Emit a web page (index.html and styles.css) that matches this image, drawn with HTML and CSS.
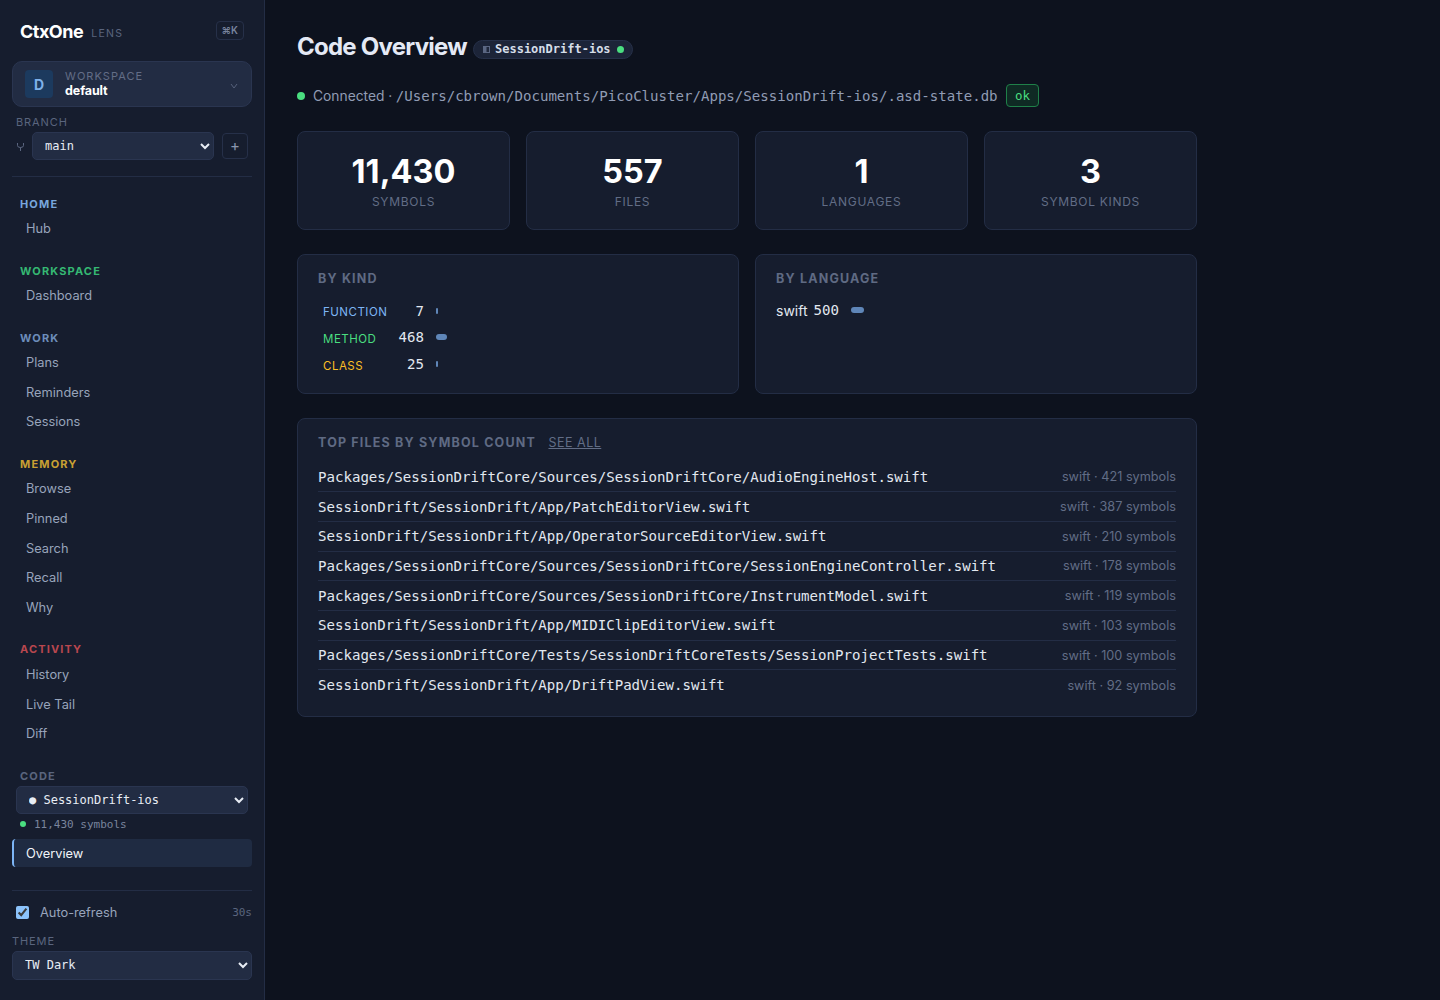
FILE: index.html
```html
<!DOCTYPE html>
<html lang="en">
<head>
<meta charset="utf-8">
<title>CtxOne Lens - Code Overview</title>
<link rel="stylesheet" href="styles.css">
</head>
<body>
<div class="app">
  <aside class="sidebar">
    <div class="brand">
      <span class="logo">CtxOne</span><span class="lens">LENS</span>
      <span class="kbd">⌘K</span>
    </div>
    <div class="workspace">
      <span class="ws-avatar">D</span>
      <span class="ws-text"><span class="ws-label">WORKSPACE</span><span class="ws-name">default</span></span>
      <svg class="ws-chev" width="8" height="6" viewBox="0 0 8 6" fill="none" stroke="#56617b" stroke-width="1"><path d="M1 1l3 4 3-4"/></svg>
    </div>
    <div class="branch-label">BRANCH</div>
    <div class="branch-row">
      <svg class="branch-icon" width="7" height="8" viewBox="0 0 7 8" fill="none" stroke="#5b6680" stroke-width="1"><path d="M.5 0v2.500Q.5 4.500 3.500 4.500T6.500 2.500V0M3.500 4.500V8"/></svg>
      <select class="select branch-select"><option>main</option></select>
      <button class="add-btn">+</button>
    </div>
    <nav class="nav">
      <div class="nav-group">
        <div class="nav-title c-blue">HOME</div>
        <a class="nav-item">Hub</a>
      </div>
      <div class="nav-group">
        <div class="nav-title c-green">WORKSPACE</div>
        <a class="nav-item">Dashboard</a>
      </div>
      <div class="nav-group">
        <div class="nav-title c-blue2">WORK</div>
        <a class="nav-item">Plans</a>
        <a class="nav-item">Reminders</a>
        <a class="nav-item">Sessions</a>
      </div>
      <div class="nav-group">
        <div class="nav-title c-yellow">MEMORY</div>
        <a class="nav-item">Browse</a>
        <a class="nav-item">Pinned</a>
        <a class="nav-item">Search</a>
        <a class="nav-item">Recall</a>
        <a class="nav-item">Why</a>
      </div>
      <div class="nav-group">
        <div class="nav-title c-red">ACTIVITY</div>
        <a class="nav-item">History</a>
        <a class="nav-item">Live Tail</a>
        <a class="nav-item">Diff</a>
      </div>
      <div class="nav-group code-group">
        <div class="nav-title c-gray">CODE</div>
        <select class="select code-select"><option>● SessionDrift-ios</option></select>
        <div class="code-status"><span class="dot dot-small"></span>11,430 symbols</div>
        <a class="nav-item active">Overview</a>
      </div>
    </nav>
    <div class="side-foot">
      <label class="refresh">
        <input type="checkbox" class="check" checked>
        <span class="refresh-text">Auto-refresh</span>
        <span class="refresh-int">30s</span>
      </label>
      <div class="theme-label">THEME</div>
      <select class="select theme-select"><option>TW Dark</option></select>
    </div>
  </aside>
  <main class="main">
    <div class="content">
      <header class="title-row">
        <h1 class="title">Code Overview</h1>
        <span class="pill"><svg class="pill-icon" width="7" height="7" viewBox="0 0 7 7"><rect width="7" height="7" fill="#5a6682"/><rect x="3.500" y="1" width="2.500" height="5" fill="#1e263a"/></svg>SessionDrift-ios<span class="dot dot-pill"></span></span>
      </header>
      <div class="conn">
        <span class="dot"></span>
        <span class="conn-text">Connected ·</span>
        <span class="conn-path">/Users/cbrown/Documents/PicoCluster/Apps/SessionDrift-ios/.asd-state.db</span>
        <span class="ok">ok</span>
      </div>
      <section class="stats">
        <div class="stat"><div class="stat-num">11,430</div><div class="stat-label">SYMBOLS</div></div>
        <div class="stat"><div class="stat-num">557</div><div class="stat-label">FILES</div></div>
        <div class="stat"><div class="stat-num">1</div><div class="stat-label">LANGUAGES</div></div>
        <div class="stat"><div class="stat-num">3</div><div class="stat-label">SYMBOL KINDS</div></div>
      </section>
      <section class="two">
        <div class="card">
          <h2 class="card-title">BY KIND</h2>
          <table class="kinds">
            <tr><td class="k-name c-fn">FUNCTION</td><td class="k-num">7</td><td class="k-bar"><span class="bar bar-thin"></span></td></tr>
            <tr><td class="k-name c-method">METHOD</td><td class="k-num">468</td><td class="k-bar"><span class="bar bar-wide"></span></td></tr>
            <tr><td class="k-name c-class">CLASS</td><td class="k-num">25</td><td class="k-bar"><span class="bar bar-thin"></span></td></tr>
          </table>
        </div>
        <div class="card">
          <h2 class="card-title">BY LANGUAGE</h2>
          <div class="lang"><span class="lang-name">swift</span><span class="k-num">500</span><span class="bar bar-lang"></span></div>
        </div>
      </section>
      <section class="card files">
        <div class="files-head"><h2 class="card-title files-title">TOP FILES BY SYMBOL COUNT</h2><a class="see-all">SEE ALL</a></div>
        <ul class="file-list">
          <li class="file"><span class="path">Packages/SessionDriftCore/Sources/SessionDriftCore/AudioEngineHost.swift</span><span class="meta">swift · 421 symbols</span></li>
          <li class="file"><span class="path">SessionDrift/SessionDrift/App/PatchEditorView.swift</span><span class="meta">swift · 387 symbols</span></li>
          <li class="file"><span class="path">SessionDrift/SessionDrift/App/OperatorSourceEditorView.swift</span><span class="meta">swift · 210 symbols</span></li>
          <li class="file"><span class="path">Packages/SessionDriftCore/Sources/SessionDriftCore/SessionEngineController.swift</span><span class="meta">swift · 178 symbols</span></li>
          <li class="file"><span class="path">Packages/SessionDriftCore/Sources/SessionDriftCore/InstrumentModel.swift</span><span class="meta">swift · 119 symbols</span></li>
          <li class="file"><span class="path">SessionDrift/SessionDrift/App/MIDIClipEditorView.swift</span><span class="meta">swift · 103 symbols</span></li>
          <li class="file"><span class="path">Packages/SessionDriftCore/Tests/SessionDriftCoreTests/SessionProjectTests.swift</span><span class="meta">swift · 100 symbols</span></li>
          <li class="file"><span class="path">SessionDrift/SessionDrift/App/DriftPadView.swift</span><span class="meta">swift · 92 symbols</span></li>
        </ul>
      </section>
    </div>
  </main>
</div>
</body>
</html>
```
FILE: styles.css
```css
* { box-sizing: border-box; }
html, body { margin: 0; height: 100%; }
body {
  background: #0d121e;
  color: #e2e8f0;
  font-family: Inter, "Liberation Sans", sans-serif;
  color-scheme: dark;
  overflow: hidden;
}
.app { display: flex; height: 1000px; }

/* Sidebar */
.sidebar {
  width: 265px;
  flex: none;
  background: #161d2e;
  border-right: 1px solid #232d45;
  padding: 21px 12px 0;
  display: flex;
  flex-direction: column;
}
.brand { display: flex; align-items: center; height: 20px; padding: 0 8px; }
.logo { font-size: 18px; font-weight: 700; color: #fff; letter-spacing: -0.5px; }
.lens { font-size: 10.500px; color: #5a657e; letter-spacing: 1.300px; margin-left: 8px; margin-top: 4px; }
.kbd {
  margin-left: auto;
  font-size: 9.800px;
  font-weight: 600;
  color: #78849e;
  border: 1px solid #263049;
  border-radius: 4px;
  padding: 3px 5px;
  line-height: 11px;
  height: 19px;
  margin-top: -1px;
}
.workspace {
  margin-top: 20px;
  height: 46px;
  background: #222c43;
  border: 1px solid #2a3550;
  border-radius: 10px;
  display: flex;
  align-items: center;
  padding: 0 13px 0 12px;
}
.ws-avatar {
  width: 28px; height: 28px;
  border-radius: 4px;
  background: #1c3a5e;
  color: #7fb2ea;
  font-weight: 700;
  font-size: 14px;
  display: flex; align-items: center; justify-content: center;
}
.ws-text { display: flex; flex-direction: column; margin-left: 12px; flex: 1; margin-top: -1px; }
.ws-label { font-size: 11px; color: #626d86; letter-spacing: 1.050px; line-height: 14px; }
.ws-name { font-size: 12.500px; font-weight: 700; color: #fff; line-height: 15px; letter-spacing: -0.1px; }
.ws-chev { margin-top: 4px; }
.branch-label { font-size: 11px; color: #5a657e; letter-spacing: 0.9px; margin: 8px 0 0 4px; line-height: 14px; }
.branch-row { display: flex; align-items: center; margin-top: 3px; padding: 0 0 0 5px; height: 28px; }
.branch-icon { flex: none; margin-right: 8px; margin-top: 1px; }
.select {
  font-family: "DejaVu Sans Mono", monospace;
  font-size: 12px;
  color: #e8edf5;
  background-color: #222c43;
  border: 1px solid #2a3550;
  border-radius: 5px;
}
.branch-select { width: 182px; height: 28px; padding-left: 8px; }
.add-btn {
  width: 26px; height: 26px; margin-left: 8px;
  background: transparent;
  border: 1px solid #263049;
  border-radius: 4px;
  color: #8a96ae;
  font-size: 15px;
  line-height: 1;
  padding: 0 0 2px;
  font-family: Inter, sans-serif;
}
.nav { margin-top: 16px; border-top: 1px solid #232d45; padding-top: 19.600px; flex: 1; }
.nav-group { margin-bottom: 19.750px; }
.nav-title { font-size: 11px; font-weight: 700; letter-spacing: 1.150px; line-height: 14px; padding-left: 8px; margin-bottom: 3.550px; }
.c-blue { color: #78a6dc; }
.c-green { color: #35b873; }
.c-blue2 { color: #6d8dbb; }
.c-yellow { color: #c9a033; }
.c-red { color: #b9474f; }
.c-gray { color: #5a657e; }
.nav-item {
  display: block;
  font-size: 12.800px;
  color: #98a4bb;
  height: 29.670px;
  line-height: 29.670px;
  padding-left: 14px;
  border-radius: 4px;
}
.nav-item.active {
  color: #f1f5f9;
  background: #1f2b42;
  border-left: 2px solid #7db5f5;
  padding-left: 12px;
  height: 28px;
  line-height: 29px;
}
.code-select { display: block; width: 232px; height: 28px; margin: 1.450px 0 0 4px; padding-left: 8px; }
.code-status {
  font-family: "DejaVu Sans Mono", monospace;
  font-size: 11px;
  color: #7a859d;
  display: flex;
  align-items: center;
  padding-left: 8px;
  height: 20px;
  margin: 0 0 5px;
}
.dot { width: 8px; height: 8px; border-radius: 50%; background: #4ade80; flex: none; }
.dot-small { width: 6px; height: 6px; margin-right: 8px; }
.side-foot { border-top: 1px solid #232d45; height: 110px; flex: none; }
.refresh { display: flex; align-items: center; height: 42px; padding-left: 4px; }
.check { width: 13px; height: 13px; margin: 0; accent-color: #8cc3fb; }
.refresh-text { font-size: 12.800px; color: #98a4bb; margin-left: 11px; }
.refresh-int { margin-left: auto; font-family: "DejaVu Sans Mono", monospace; font-size: 11px; color: #5a657e; }
.theme-label { font-size: 11px; color: #5a657e; letter-spacing: 0.9px; line-height: 14px; margin-top: 1px; }
.theme-select { display: block; width: 240px; height: 29px; margin-top: 3px; padding: 0 0 2px 8px; }

/* Main */
.main { flex: 1; padding: 32px 32px 0; }
.content { width: 900px; }
.title-row { display: flex; align-items: center; height: 32px; }
.title { margin: -3px 0 0; font-size: 24px; font-weight: 700; color: #e4e9f5; letter-spacing: -0.75px; }
.pill {
  display: inline-flex; align-items: center;
  height: 19px;
  margin-left: 6px; margin-top: 2px;
  padding: 0 8px 0 9px;
  background: #1c2438;
  border: 1px solid #263049;
  border-radius: 10px;
  font-family: "DejaVu Sans Mono", monospace;
  font-size: 12px;
  font-weight: 700;
  color: #d5dde8;
}
.pill-icon { margin-right: 5px; }
.dot-pill { width: 7px; height: 7px; margin-left: 6px; }
.conn { display: flex; align-items: center; margin-top: 20px; height: 24px; font-size: 13.800px; color: #919cb4; }
.conn-text { margin-left: 8px; }
.conn-path { margin-left: 3.500px; font-family: "DejaVu Sans Mono", monospace; font-size: 14.080px; }
.ok {
  margin-left: 8.500px;
  font-family: "DejaVu Sans Mono", monospace;
  font-size: 12.500px;
  height: 23px; line-height: 21px;
  margin-top: -1px;
  padding: 0 8px;
  color: #4ade80;
  background: #0f2a24;
  border: 1px solid #1f8049;
  border-radius: 4px;
}
.stats { display: grid; grid-template-columns: repeat(4, 213px); gap: 16px; margin-top: 23px; }
.stat {
  height: 99px;
  background: #161d2e;
  border: 1px solid #232d45;
  border-radius: 8px;
  text-align: center;
  padding-top: 20px;
}
.stat-num { font-size: 32.500px; font-weight: 700; color: #fff; line-height: 40px; }
.stat-label { font-size: 12px; color: #626d86; letter-spacing: 0.7px; line-height: 16px; margin-top: 2px; }
.two { display: grid; grid-template-columns: 442px 442px; gap: 16px; margin-top: 24px; }
.card {
  background: #161d2e;
  border: 1px solid #232d45;
  border-radius: 8px;
  padding: 16px 20px;
  height: 140px;
}
.card-title { margin: 0; font-size: 12.500px; font-weight: 700; letter-spacing: 1.180px; color: #5f6a83; line-height: 16px; }
.kinds { border-collapse: collapse; margin: 11px 0 0 5px; }
.kinds td { padding: 0; height: 26.670px; }
.k-name { font-family: Inter, sans-serif; font-size: 11.500px; letter-spacing: 0.5px; width: 70px; padding-top: 2px !important; }
.c-fn { color: #7db5f5; }
.c-method { color: #4ade80; }
.c-class { color: #fbbf24; }
.k-num { font-family: "DejaVu Sans Mono", monospace; font-size: 14.080px; color: #e2e8f0; text-align: right; }
.kinds .k-num { width: 31px; padding-bottom: 1px; }
.k-bar { padding: 0 0 1px 12px !important; }
.bar { display: block; height: 6px; background: #5f86b8; border-radius: 3px; }
.kinds .k-bar { width: 60px; }
.bar-thin { width: 2px; }
.bar-wide { width: 11px; }
.lang { display: flex; align-items: center; margin-top: 10px; height: 26px; }
.lang-name { font-size: 14px; color: #e2e8f0; margin-right: 6px; }
.bar-lang { width: 13px; margin-left: 12px; }
.files { margin-top: 24px; height: 299px; }
.files-head { display: flex; align-items: center; }
.see-all { font-size: 12.500px; color: #626d86; letter-spacing: 0.5px; text-decoration: underline; margin-left: 12.500px; margin-top: -1px; }
.file-list { list-style: none; margin: 11.500px 0 0; padding: 0; }
.file {
  display: flex; justify-content: space-between; align-items: center;
  height: 29.710px;
  border-bottom: 1px solid #232d45;
}
.file:last-child { border-bottom: 0; }
.path { font-family: "DejaVu Sans Mono", monospace; font-size: 14.080px; color: #e2e8f0; }
.meta { font-size: 12.700px; color: #626d86; }
```
